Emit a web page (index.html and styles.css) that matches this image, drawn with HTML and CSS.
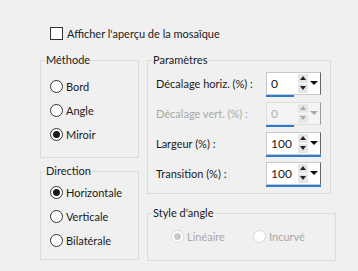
FILE: index.html
```html
<!DOCTYPE html>
<html lang="fr">
  <head>
    <meta charset="UTF-8" />
    <title>Mosaïque</title>
    <link rel="stylesheet" href="styles.css">
  </head>
  <body>
    <div class="dialog">
      <label class="check-row">
        <span class="checkbox"></span>
        Afficher l'aperçu de la mosaïque
      </label>

      <div class="columns">
        <div class="col col-left">
          <fieldset class="group methode">
            <legend>Méthode</legend>
            <div class="group-body">
              <div class="radio-row"><span class="radio"></span>Bord</div>
              <div class="radio-row"><span class="radio"></span>Angle</div>
              <div class="radio-row"><span class="radio checked"></span>Miroir</div>
            </div>
          </fieldset>

          <fieldset class="group direction">
            <legend>Direction</legend>
            <div class="group-body">
              <div class="radio-row"><span class="radio checked"></span>Horizontale</div>
              <div class="radio-row"><span class="radio"></span>Verticale</div>
              <div class="radio-row"><span class="radio"></span>Bilatérale</div>
            </div>
          </fieldset>
        </div>

        <div class="col col-right">
          <fieldset class="group params">
            <legend>Paramètres</legend>
            <div class="group-body">
              <div class="param-row">
                <span class="param-label">Décalage horiz. (%) :</span>
                <div class="spin">
                  <div class="spin-box">
                    <span class="spin-value">0</span>
                    <span class="spin-buttons"><i class="up"></i><i class="down"></i></span>
                    <span class="spin-drop"></span>
                  </div>
                  <div class="spin-bar"><span style="width: 28px"></span></div>
                </div>
              </div>
              <div class="param-row disabled">
                <span class="param-label">Décalage vert. (%) :</span>
                <div class="spin">
                  <div class="spin-box">
                    <span class="spin-value">0</span>
                    <span class="spin-buttons"><i class="up"></i><i class="down"></i></span>
                    <span class="spin-drop"></span>
                  </div>
                  <div class="spin-bar"><span style="width: 28px"></span></div>
                </div>
              </div>
              <div class="param-row">
                <span class="param-label">Largeur (%) :</span>
                <div class="spin">
                  <div class="spin-box">
                    <span class="spin-value">100</span>
                    <span class="spin-buttons"><i class="up"></i><i class="down"></i></span>
                    <span class="spin-drop"></span>
                  </div>
                  <div class="spin-bar"><span style="width: 100%"></span></div>
                </div>
              </div>
              <div class="param-row">
                <span class="param-label">Transition (%) :</span>
                <div class="spin">
                  <div class="spin-box">
                    <span class="spin-value">100</span>
                    <span class="spin-buttons"><i class="up"></i><i class="down"></i></span>
                    <span class="spin-drop"></span>
                  </div>
                  <div class="spin-bar"><span style="width: 100%"></span></div>
                </div>
              </div>
            </div>
          </fieldset>

          <fieldset class="group style-angle">
            <legend>Style d'angle</legend>
            <div class="group-body inline-radios">
              <div class="radio-row off"><span class="radio checked"></span>Linéaire</div>
              <div class="radio-row off"><span class="radio"></span>Incurvé</div>
            </div>
          </fieldset>
        </div>
      </div>
    </div>
  </body>
</html>
```

FILE: styles.css
```css
* {
  box-sizing: border-box;
  margin: 0;
  padding: 0;
}

body {
  font-family: Lato, "Noto Sans", sans-serif;
  font-size: 11px;
  color: #1a1a1a;
  background: #f0f0f0;
  width: 358px;
  height: 271px;
  overflow: hidden;
}

.dialog {
  padding: 27px 0 0 40px;
}

.check-row {
  display: flex;
  align-items: center;
  gap: 4px;
  height: 13px;
  margin-left: 10px;
  white-space: nowrap;
}

.checkbox {
  width: 13px;
  height: 13px;
  border: 1px solid #333;
  background: #fff;
}

.columns {
  display: flex;
  gap: 8px;
  margin-top: 12px;
}

.col {
  display: flex;
  flex-direction: column;
}

.col-left {
  width: 99px;
  gap: 5px;
}

.col-right {
  width: 184px;
  gap: 11px;
}

.group {
  border: 1px solid #dcdcdc;
  padding: 0;
}

.group legend {
  margin-left: 4px;
  padding: 0 1px;
  line-height: 16px;
  height: 16px;
}

.radio-row {
  display: flex;
  align-items: center;
  gap: 3px;
  height: 24px;
  white-space: nowrap;
}

.radio {
  width: 13px;
  height: 13px;
  border: 1px solid #333;
  border-radius: 50%;
  background: #fff;
  display: flex;
  align-items: center;
  justify-content: center;
}

.radio.checked::after {
  content: "";
  width: 7px;
  height: 7px;
  border-radius: 50%;
  background: #1a1a1a;
}

.methode .group-body {
  padding: 6px 0 11px 9px;
}

.direction .group-body {
  padding: 1px 0 6px 9px;
}

.direction .radio-row:last-child {
  height: 25px;
}

.params .group-body {
  padding: 0 0 5px 8px;
}

.param-row {
  display: flex;
  align-items: center;
  height: 30px;
}

.param-label {
  width: 110px;
  white-space: nowrap;
}

.param-row.disabled .param-label {
  color: #a8a8a8;
}

.spin {
  width: 55px;
  padding-top: 3px;
}

.spin-box {
  display: flex;
  height: 23px;
  border: 1px solid #c8c8c8;
  border-right-color: #666;
  background: #fff;
}

.spin-value {
  flex: 1;
  padding: 3px 0 0 4px;
  line-height: 16px;
  font-size: 12px;
}

.spin-buttons {
  width: 10px;
  display: flex;
  flex-direction: column;
  background: #e6e6e6;
  margin: 1px 0;
}

.spin-buttons i {
  flex: 1;
  display: flex;
  align-items: center;
  justify-content: center;
}

.spin-buttons i::after {
  content: "";
  border-left: 3px solid transparent;
  border-right: 3px solid transparent;
}

.spin-buttons .up::after {
  border-bottom: 4px solid #222;
}

.spin-buttons .down::after {
  border-top: 4px solid #222;
}

.spin-buttons .down {
  border-top: 1px solid #fff;
}

.spin-drop {
  width: 12px;
  display: flex;
  align-items: center;
  justify-content: center;
}

.spin-drop::after {
  content: "";
  border-left: 4px solid transparent;
  border-right: 4px solid transparent;
  border-top: 4px solid #111;
}

.spin-bar {
  height: 3px;
}

.spin-bar span {
  display: block;
  height: 2px;
  background: #2a7bd0;
}

.disabled .spin-box {
  background: #f4f4f4;
  border-color: #ddd;
  border-right-color: #999;
}

.disabled .spin-value {
  color: #b0b0b0;
}

.disabled .spin-buttons .up::after {
  border-bottom-color: #aaa;
}

.disabled .spin-buttons .down::after {
  border-top-color: #aaa;
}

.disabled .spin-drop::after {
  border-top-color: #aaa;
}

.style-angle .group-body {
  padding: 3px 0 12px 23px;
}

.inline-radios {
  display: flex;
}

.inline-radios .radio-row {
  width: 82px;
}

.radio-row.off {
  color: #a8a8a8;
}

.radio-row.off .radio {
  border-color: #d8d8d8;
}

.radio-row.off .radio.checked::after {
  background: #c8c8c8;
}
```
